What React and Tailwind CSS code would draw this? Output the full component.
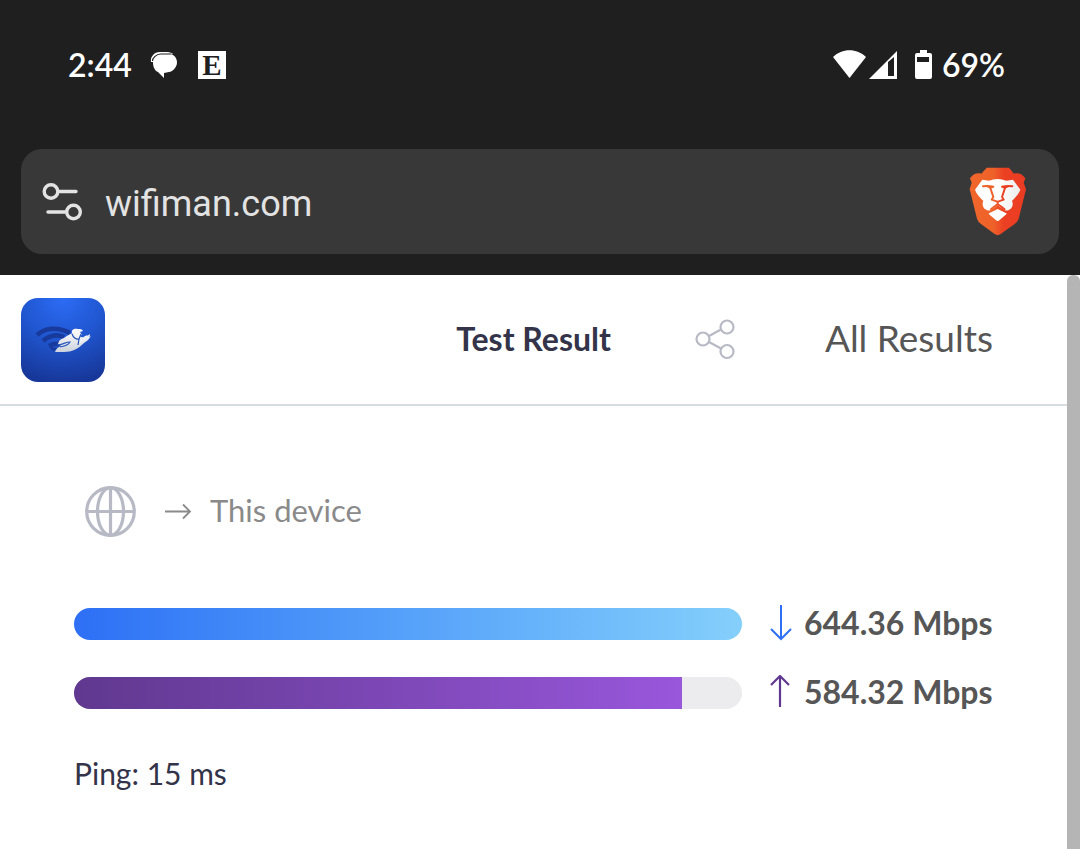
function ChatIcon() {
  return (
    <svg viewBox="0 0 28 28" className="size-7" aria-hidden="true">
      <path d="M1 11C0 6 4 1 10 1h7c3 0 5 1 6 2L3 11Z" fill="#fff" />
      <path d="M11 3h8c5 0 8 4 8 8.500s-4 9-8 9.500l-5 1v5l-6-6c-3-1-5-5-5-9.500C3 7 7 3 11 3Z" fill="#fff" />
      <path d="M2.500 10c0-3 4-7 8-7h11" fill="none" stroke="#1f1f1f" strokeWidth="1.200" />
    </svg>
  );
}

function BraveIcon() {
  return (
    <svg viewBox="57 52 174 207" className="h-[69px] w-[58px]" aria-hidden="true">
      <defs>
        <linearGradient id="brave" gradientUnits="userSpaceOnUse" x1="57" x2="231" y1="0" y2="0">
          <stop offset="0" stopColor="#f1662b" />
          <stop offset=".42" stopColor="#ee6229" />
          <stop offset=".6" stopColor="#ec4023" />
          <stop offset="1" stopColor="#e93b22" />
        </linearGradient>
        <linearGradient id="mane" x1="0" x2="1">
          <stop offset=".5" stopColor="#fff" />
          <stop offset="1" stopColor="#ececec" />
        </linearGradient>
      </defs>
      <path d="M110 54h67l15 18c14-4 26 2 34 14l-5 13 7 20-22 88q-3 9-11 15l-44 32q-8 5-16 0l-43-32q-8-6-11-15L59 119l6-20-5-13c8-12 20-18 34-14Z" fill="url(#brave)" />
      <path d="M97 90l20 3q13-5 26-5t26 5l20-3 22 30c-4 12-14 22-25 34 5 9 1 20-6 25-8 6-15 4-20 0l-17-12-17 12c-5 4-12 6-20 0-7-5-11-16-6-25-11-12-21-22-25-34Z" fill="url(#mane)" />
      <g fill="none" stroke="url(#brave)" strokeWidth="6" strokeLinecap="round" strokeLinejoin="round">
        <path d="M99 110q14-3 31 1l-9 4 9 27q-3 4-5 8l17 6" />
        <path d="M187 110q-14-3-31 1l9 4-9 27q3 4 5 8l-17 6" />
        <path d="M143 157v7q-8 4-20 15M143.500 164q8 4 20 15" />
      </g>
      <path d="M99 108l20 2 9 2-8 5-3-2Z" fill="#ee6229" />
      <path d="M187 108l-20 2-9 2 8 5 3-2Z" fill="#e93b22" />
      <path d="M143 178l26 13q2 2 0 3l-23 19q-3 2-6 0l-23-19q-2-1 0-3Z" fill="#fff" />
    </svg>
  );
}

function WifimanLogo() {
  return (
    <svg viewBox="0 0 84 84" className="size-21" role="img" aria-label="WiFiman">
      <defs>
        <radialGradient id="tile" cx=".5" cy="0" r="1">
          <stop offset="0" stopColor="#2c6cf5" />
          <stop offset=".5" stopColor="#2056d0" />
          <stop offset="1" stopColor="#17389a" />
        </radialGradient>
        <linearGradient id="hero" x1="0" y1="0" x2="0" y2="1">
          <stop offset="0" stopColor="#f7f7f8" />
          <stop offset="1" stopColor="#cdd3dc" />
        </linearGradient>
      </defs>
      <rect width="84" height="84" rx="17" fill="url(#tile)" />
      <g fill="none" stroke="#173a9c" strokeWidth="4.500">
        <path d="M16 37C25 29 38 29 49 35" />
        <path d="M22 43c7-6 14-7 21-4" />
        <path d="M28 48c5-3 8-3 12-1" />
      </g>
      <path d="M28 49l9 1-5 3Z" fill="#173a9c" />
      <path d="M34 54c1-3 3-5 6-6l-3-2c1-4 3-5 6-6 4-3 7-5 11-5l4 1 2 3 5 1c3-1 5-2 5-2q-2 4-7 7c-6 6-12 9-20 9Z" fill="url(#hero)" />
      <path d="M51 35c-1-3 2-5 6-4 2 0 4 0 5 2l-3 1 2 3-4 1Z" fill="#f7f7f8" />
      <path d="M58 42l6-4c2-1 3 0 5-2q0 4-4 6l-6 3Z" fill="#eceff4" />
      <path d="M36 47c6 0 8-3 13-3-2 4-6 4-10 5M51 36c1 3 4 6 7 5m0 0l-1 6M58 41l2-5" fill="none" stroke="#2454bc" strokeWidth="1.200" />
    </svg>
  );
}

function Speed({ value, label, children, fill, width }) {
  return (
    <div className="flex items-center gap-7">
      <div
        role="progressbar"
        aria-label={label}
        aria-valuenow={width}
        aria-valuemin={0}
        aria-valuemax={100}
        className="h-8 flex-1 overflow-hidden rounded-full bg-[#ececee]"
      >
        <div className={"h-full " + fill} style={{ width: width + "%" }} />
      </div>
      <div className="flex items-center gap-3">
        {children}
        <span className="w-[189px] pb-0.5 whitespace-nowrap text-[32px] leading-8 font-bold text-[#565656]">{value}</span>
      </div>
    </div>
  );
}

export default function App() {
  return (
    <div className="flex min-h-screen flex-col bg-white font-['Lato',sans-serif]">
      <header className="bg-[#1f1f1f] px-[21px] pb-[21px]">
        <div className="flex h-[149px] items-center justify-between pr-[54px] pb-5 pl-[47px] text-white">
          <div className="flex items-center gap-[18px]">
            <time className="text-[32px] leading-9 font-semibold">2:44</time>
            <ChatIcon />
            <span className="ml-0.5 flex size-7 items-center justify-center bg-white font-['Liberation_Serif',serif] text-[29px] leading-7 font-bold text-[#1f1f1f]">E</span>
          </div>
          <div className="flex items-center">
            <svg viewBox="0 0 102 32" className="h-8 w-[102px]" fill="#fff" aria-hidden="true">
              <path d="M1 8C10-1 25-1 34 8L17.500 29Z" />
              <path fillRule="evenodd" d="M37 30L65 2v28ZM56 13v14h6V8Z" />
              <path fillRule="evenodd" d="M88 1h7v3h3q2 0 2 2v22q0 2-2 2H85q-2 0-2-2V6q0-2 2-2h3ZM85 8v5h12V8Z" />
            </svg>
            <span className="pl-2 text-[32px] leading-9 font-semibold">69%</span>
          </div>
        </div>
        <div className="flex h-[105px] items-center rounded-[21px] bg-[#383838] pr-8 pl-[21px]">
          <button type="button" aria-label="Site settings" className="mr-[23px]">
            <svg viewBox="0 0 40 40" className="size-10" fill="none" stroke="#e3e3e3" strokeWidth="3.400" strokeLinecap="round" aria-hidden="true">
              <circle cx="9" cy="9.500" r="6.800" />
              <path d="M17 9.500h17M6 30h17" />
              <circle cx="31.500" cy="30" r="6.800" />
            </svg>
          </button>
          <input
            type="text"
            aria-label="Address"
            defaultValue="wifiman.com"
            className="min-w-0 flex-1 bg-transparent pt-1 font-['Roboto',sans-serif] text-[36px] leading-11 text-[#e3e3e3] outline-none"
          />
          <button type="button" aria-label="Brave Shields">
            <BraveIcon />
          </button>
        </div>
      </header>

      <div className="flex flex-1">
        <main className="min-w-0 flex-1">
          <div className="border-b-2 border-[#d8dbdf] pt-[23px] pr-[74px] pb-[22px] pl-[21px]">
            <div className="flex items-center">
              <WifimanLogo />
              <h1 className="ml-auto pb-0.5 text-[32px] leading-9 font-bold text-[#33344a]">Test Result</h1>
              <button type="button" aria-label="Share" className="ml-[84px]">
                <svg viewBox="0 0 40 40" className="size-10 overflow-visible" fill="none" stroke="#b7bac5" strokeWidth="2.200" aria-hidden="true">
                  <circle cx="8" cy="19" r="6.500" />
                  <circle cx="32" cy="7" r="6.500" />
                  <circle cx="32" cy="31.500" r="6.500" />
                  <path d="M14 16l12-6.500M14 22l12 6.500" />
                </svg>
              </button>
              <a href="#results" className="ml-[90px] pb-1 whitespace-nowrap text-[37px] leading-11 text-[#565656]">All Results</a>
            </div>
          </div>

          <section className="px-[74px] pt-20">
            <div className="flex items-center pl-[11px] text-[#8a8a8a]">
              <svg viewBox="0 0 51 51" className="size-[51px]" fill="none" stroke="#b7bac5" strokeWidth="3.200" aria-hidden="true">
                <circle cx="25.500" cy="25.500" r="23.800" />
                <ellipse cx="25.500" cy="25.500" rx="13" ry="23.800" />
                <path d="M25.500 2v47M2 25.500h47" />
              </svg>
              <svg viewBox="0 0 27 18" className="ml-[29px] h-[18px] w-[27px]" fill="none" stroke="currentColor" strokeWidth="1.800" aria-hidden="true">
                <path d="M0 8.500h25M18 1.500l7 7-7 7" />
              </svg>
              <span className="ml-[18px] pb-1 text-[31px] leading-9">This device</span>
            </div>

            <div className="flex flex-col gap-[33px] pt-[69px]">
              <Speed label="Download" value="644.36 Mbps" width={100} fill="bg-linear-to-r from-[#2e6ff5] to-[#84cffb]">
                <svg viewBox="0 0 22 36" className="h-9 w-[22px] overflow-visible" fill="none" stroke="#2e6ff5" strokeWidth="2" aria-hidden="true">
                  <path d="M11-1v33M1 23l10 10 10-10" />
                </svg>
              </Speed>
              <Speed label="Upload" value="584.32 Mbps" width={91} fill="bg-linear-to-r from-[#60388f] to-[#9957dc]">
                <svg viewBox="0 0 22 36" className="h-9 w-[22px]" fill="none" stroke="#60388f" strokeWidth="2.200" aria-hidden="true">
                  <path d="M10 32V1M1 10l9-9 9 9" />
                </svg>
              </Speed>
            </div>

            <p className="pt-11 text-[30px] leading-9 text-[#33344a]">Ping: 15 ms</p>
          </section>
        </main>
        <div className="w-[13px] rounded-t-md bg-[#b5b5b5]" />
      </div>
    </div>
  );
}
